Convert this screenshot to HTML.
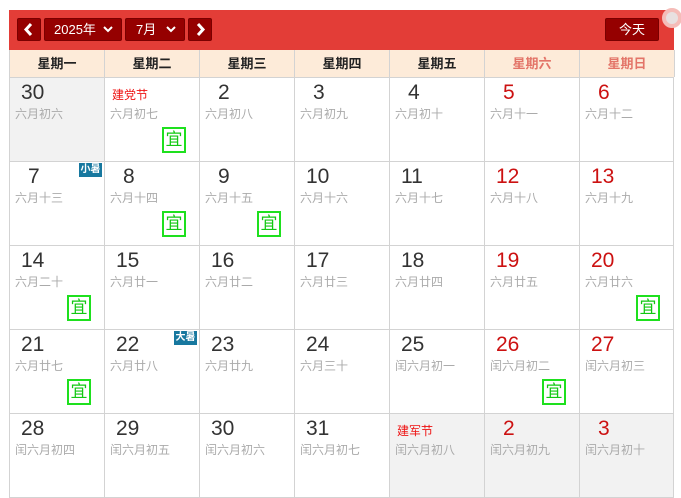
<!DOCTYPE html>
<html><head><meta charset="utf-8"><style>
*{margin:0;padding:0;box-sizing:border-box}
body{width:681px;height:498px;background:#fff;position:relative;overflow:hidden;font-family:"Liberation Sans","Noto Sans CJK SC",sans-serif}
.hd{position:absolute;left:9px;top:10px;width:665px;height:40px;background:#e33d37}
.b{position:absolute;top:8px;height:23px;background:#950000;border:1px solid #7a0000;border-radius:2px;color:#fff;font-size:13px;line-height:21px}
.wk{position:absolute;left:9px;top:50px;width:665px;height:27px;background:#fdebd9;border-left:1px solid #d3d3d3}
.wk div{position:absolute;top:0;width:95px;height:27px;border-right:1px solid #d3d3d3;text-align:center;font-size:13px;font-weight:bold;line-height:27px;color:#222}
.c{position:absolute;width:96px;height:85px;border:1px solid #d3d3d3;background:#fff}
.g{background:#f2f2f2}
.n{position:absolute;top:3px;font-size:21px;color:#333;line-height:24px}
.r .n{color:#cc1111}
.l{position:absolute;left:5px;top:29px;font-size:12px;color:#aaa;line-height:14px}
.f{position:absolute;left:7px;top:8px;font-size:12px;color:#ee1111}
.y{position:absolute;right:13px;bottom:8px;width:24px;height:26px;border:2px solid #1ee01e;color:#12c812;font-size:17px;line-height:22px;text-align:center}
.bg{position:absolute;right:2px;top:1px;width:23px;height:14px;background:#17789f;color:#fff;font-size:10px;line-height:14px;text-align:center;font-weight:bold}
svg{position:absolute}
</style></head><body>
<div class="hd">
<div class="b" style="left:8px;width:24px"><svg width="22" height="21" viewBox="0 0 22 21"><path d="M13 5L8 10.5L13 16" stroke="#fff" stroke-width="3" fill="none"/></svg></div>
<div class="b" style="left:35px;width:78px;padding-left:9px">2025年<svg style="right:8px;top:7px" width="10" height="7"><path d="M1 1L5 5L9 1" stroke="#fff" stroke-width="2" fill="none"/></svg></div>
<div class="b" style="left:116px;width:60px;padding-left:10px">7月<svg style="right:8px;top:7px" width="10" height="7"><path d="M1 1L5 5L9 1" stroke="#fff" stroke-width="2" fill="none"/></svg></div>
<div class="b" style="left:179px;width:24px"><svg width="22" height="21" viewBox="0 0 22 21"><path d="M9 5L14 10.5L9 16" stroke="#fff" stroke-width="3" fill="none"/></svg></div>
<div class="b" style="left:596px;width:54px;text-align:center">今天</div>
</div>
<div style="position:absolute;left:662px;top:8px;width:20px;height:20px;border-radius:50%;background:#e8e0e0;border:4px solid #f5bcb8"></div>
<div class="wk">
<div style="left:0">星期一</div><div style="left:95px">星期二</div><div style="left:190px">星期三</div><div style="left:285px">星期四</div><div style="left:380px">星期五</div><div style="left:475px;color:#e37468">星期六</div><div style="left:570px;color:#e37468">星期日</div>
</div>
<div id="g"></div>
<script>
var d=[
[["30","六月初六","g"],["","六月初七","y","建党节"],["2","六月初八"],["3","六月初九"],["4","六月初十"],["5","六月十一","r"],["6","六月十二","r"]],
[["7","六月十三","b小暑"],["8","六月十四","y"],["9","六月十五","y"],["10","六月十六"],["11","六月十七"],["12","六月十八","r"],["13","六月十九","r"]],
[["14","六月二十","y"],["15","六月廿一"],["16","六月廿二"],["17","六月廿三"],["18","六月廿四"],["19","六月廿五","r"],["20","六月廿六","ry"]],
[["21","六月廿七","y"],["22","六月廿八","b大暑"],["23","六月廿九"],["24","六月三十"],["25","闰六月初一"],["26","闰六月初二","ry"],["27","闰六月初三","r"]],
[["28","闰六月初四"],["29","闰六月初五"],["30","闰六月初六"],["31","闰六月初七"],["","闰六月初八","g","建军节"],["2","闰六月初九","rg"],["3","闰六月初十","rg"]]];
var h="";
for(var r=0;r<5;r++)for(var c=0;c<7;c++){var x=d[r][c],o=x[2]||"";
var cls="c"+(o.indexOf("g")>=0?" g":"")+(o.indexOf("r")>=0?" r":"");
var s='<div class="'+cls+'" style="left:'+(9+95*c)+'px;top:'+(77+84*r)+'px'+(c==6?';width:95px':'')+'">';
if(x[0])s+='<div class="n" style="left:'+(x[0].length>1?11:18)+'px">'+x[0]+'</div>';
if(x[3])s+='<div class="f">'+x[3]+'</div>';
s+='<div class="l">'+x[1]+'</div>';
if(o.indexOf("y")>=0)s+='<div class="y">宜</div>';
if(o.charAt(0)=="b")s+='<div class="bg">'+o.slice(1)+'</div>';
h+=s+'</div>';}
document.getElementById("g").innerHTML=h;
</script>
</body></html>
